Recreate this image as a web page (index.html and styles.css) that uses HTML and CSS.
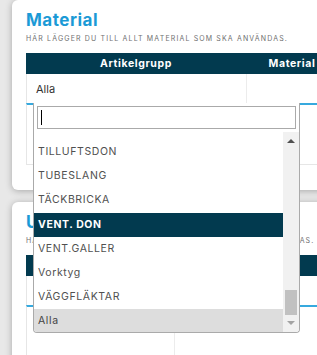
FILE: index.html
```html
<!DOCTYPE html>
<html lang="sv">
<head>
    <meta charset="UTF-8">
    <meta name="viewport" content="width=device-width, initial-scale=1.0">
    <title>Material</title>
    <link rel="stylesheet" href="styles.css">
</head>
<body>
    <div class="page">
        <section class="card card-first">
            <h2 class="card-title">Material</h2>
            <p class="card-sub">Här lägger du till allt material som ska användas.</p>
            <div class="table">
                <div class="thead">
                    <div class="th th-group">Artikelgrupp</div>
                    <div class="th">Material</div>
                </div>
                <div class="row">
                    <div class="td td-group">Alla</div>
                    <div class="td"></div>
                </div>
                <div class="row row-edit"></div>
            </div>
        </section>

        <section class="card card-second">
            <h2 class="card-title">Utrustning</h2>
            <p class="card-sub">Här lägger du till alla utrustningar som ska användas.</p>
            <div class="table">
                <div class="thead">
                    <div class="th th-tool">Utrustning</div>
                    <div class="th">Antal</div>
                </div>
                <div class="row row-empty"></div>
                <div class="row row-edit row-split">
                    <div class="td td-tool"></div>
                    <div class="td"></div>
                </div>
            </div>
        </section>

        <!-- öppen select-lista för artikelgrupp -->
        <div class="dropdown">
            <div class="search"><span class="caret"></span></div>
            <div class="results">
                <ul class="options">
                    <li>TILLUFTSDON</li>
                    <li>TUBESLANG</li>
                    <li>TÄCKBRICKA</li>
                    <li class="active">VENT. DON</li>
                    <li>VENT.GALLER</li>
                    <li>Vorktyg</li>
                    <li>VÄGGFLÄKTAR</li>
                    <li class="selected">Alla</li>
                </ul>
                <div class="scrollbar">
                    <span class="arrow-up"></span>
                    <span class="thumb"></span>
                    <span class="arrow-down"></span>
                </div>
            </div>
        </div>
    </div>
</body>
</html>
```

FILE: styles.css
```css
body {
    margin: 0;
    background-color: #e8e8e8;
    font-family: Inter, "Noto Sans", sans-serif;
    overflow: hidden;
}
.page {
    position: relative;
    display: flow-root;
    padding-left: 12px;
    height: 355px;
}
.card {
    background: #fff;
    border-radius: 6px;
    box-shadow: 0 1px 7px rgba(0, 0, 0, 0.28);
    padding: 10px 0 0 14px;
    box-sizing: border-box;
}
.card-first {
    width: 326px;
    height: 190px;
    margin-bottom: 12px;
}
.card-second {
    width: 520px;
    height: 200px;
}
.card-title {
    margin: 0;
    font-size: 17px;
    line-height: 20px;
    font-weight: 700;
    letter-spacing: 0.5px;
    color: #1b9ad6;
}
.card-sub {
    margin: 4px 0 9px;
    font-size: 7px;
    line-height: 10px;
    letter-spacing: 1.15px;
    text-transform: uppercase;
    color: #707070;
    white-space: nowrap;
}
.thead {
    display: flex;
    height: 21px;
    background-color: #023a4f;
    color: #fff;
    font-size: 10.5px;
    font-weight: 700;
    letter-spacing: 0.6px;
}
.th {
    display: flex;
    align-items: center;
    justify-content: center;
    flex: 1;
}
.th-group {
    flex: 0 0 220px;
}
.th-tool {
    flex: 0 0 149px;
}
.row {
    display: flex;
    border-left: 1px solid #e6e6e6;
}
.td {
    flex: 1;
    height: 29px;
    display: flex;
    align-items: center;
    font-size: 11px;
    color: #333;
}
.td-group {
    flex: 0 0 210px;
    padding-left: 9px;
    border-right: 1px solid #ececec;
}
.row-edit {
    height: 59px;
    border-top: 2px solid #36a9de;
    border-bottom: 1px solid #e6e6e6;
}
.row-empty {
    height: 29px;
}
.row-split .td {
    height: auto;
}
.td-tool {
    flex: 0 0 147px;
    border-right: 1px solid #ececec;
}
.dropdown {
    position: absolute;
    left: 33px;
    top: 103px;
    width: 267px;
    box-sizing: border-box;
    background: #fff;
    border: 1px solid #aaa;
    border-top: none;
    border-radius: 0 0 4px 4px;
    padding: 3px 0 0;
    overflow: hidden;
}
.search {
    height: 23px;
    margin: 0 3px 3px;
    border: 1px solid #aaa;
    box-sizing: border-box;
    padding: 3px 0 0 3px;
}
.caret {
    display: block;
    width: 1px;
    height: 15px;
    background: #000;
}
.results {
    display: flex;
    height: 200px;
}
.options {
    flex: 1;
    list-style: none;
    margin: 0;
    padding: 8px 0 0;
}
.options li {
    height: 24.2px;
    line-height: 24px;
    padding-left: 4px;
    font-size: 10.5px;
    letter-spacing: 0.6px;
    color: #505050;
}
.options li.active {
    background-color: #023a4f;
    color: #fff;
    font-weight: 700;
}
.options li.selected {
    background-color: #ddd;
    color: #444;
}
.scrollbar {
    position: relative;
    width: 16px;
    background: #f1f1f1;
}
.arrow-up, .arrow-down {
    position: absolute;
    left: 4px;
    width: 0;
    height: 0;
    border-left: 4px solid transparent;
    border-right: 4px solid transparent;
}
.arrow-up {
    top: 7px;
    border-bottom: 4px solid #505050;
}
.arrow-down {
    top: 189px;
    border-top: 4px solid #a3a3a3;
}
.thumb {
    position: absolute;
    left: 2px;
    top: 158px;
    width: 12px;
    height: 25px;
    background: #c1c1c1;
}
```
